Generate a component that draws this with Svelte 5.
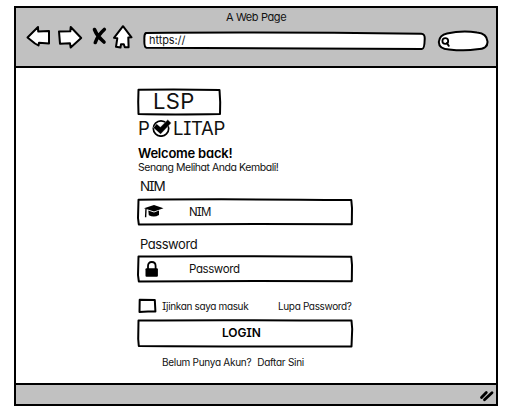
<script>
  const fields = { user: 'NIM', pass: 'Password' };
</script>

{#snippet frame(w, h, d)}
  <svg class="frame" width={w} height={h} viewBox="0 0 {w} {h}" aria-hidden="true">
    <path {d} fill="#fff" stroke="#000" stroke-width="2" stroke-linejoin="round" />
  </svg>
{/snippet}

<div class="page">
  <div class="window">
    <header>
      <div class="title"><span>A Web Page</span></div>
      <nav>
        <svg class="tools" width="110" height="28" viewBox="0 0 110 28" fill="#fff" stroke="#000" stroke-width="2" stroke-linejoin="round" stroke-linecap="round">
          <path d="M1.5 12.5 L12 2 L12.2 6.5 L23 6 L23 18.5 L13 17.8 L12.5 20.5 L9 18.5Z" />
          <path d="M33 6.5 L44.3 6.3 L44.7 2 L55.2 13 L44.7 22.5 L44 18.3 L34 18.7Z" />
          <path d="M68.5 4.5 Q71 11 78 17M78.3 4.5 Q72 10 69.3 17.5" stroke-width="3.6" fill="none" />
          <path d="M97 1.2 L105.5 12.3 L102.3 12.6 L102.6 22.3 L98.8 22.3 L97.8 19.2 L95 19.2 L94.5 22.5 L90 21.8 L91.3 13.3 L88 12.8Z" />
        </svg>
        <div class="url">
          {@render frame(284, 20, 'M3 2 Q120 .8 278 2.8 Q282 2.6 281.7 8 Q281.5 18 279 18 Q120 17 3.5 16.8 Q1 16 1.4 9 Q1 3 3 2Z')}
          <span>https://</span>
        </div>
        <svg class="search" width="54" height="24" viewBox="0 0 54 24" fill="#fff" stroke="#000" stroke-width="2">
          <path d="M10 3.5 Q25 .3 40 2.5 Q50 3.5 50.5 11.5 Q51 19 40 19.3 Q28 21.3 12 19.5 Q2 19 1.8 12 Q2.5 5 10 3.5Z" />
          <circle cx="8.3" cy="11" r="2.9" stroke-width="1.8" />
          <path d="M10 13.2 L11.7 15.8" stroke-linecap="round" />
        </svg>
      </nav>
    </header>

    <main>
      <div class="lsp">
        {@render frame(85, 28, 'M1.5 1.8 Q40 1 82.5 2 L83.2 14 L83 26 Q35 26.8 1.5 26 L1.2 14Z')}
        <span>LSP</span>
      </div>
      <div class="brand">
        <span class="p">P</span>
        <svg width="20" height="18" viewBox="0 0 20 18">
          <circle cx="9" cy="9.5" r="7.7" fill="none" stroke="#000" stroke-width="1.7" />
          <path d="M1.3 8.8 L4.6 4.8 L8.4 8 L15.8 .6 L19.3 4 L8.6 15.2Z" stroke="#fff" stroke-width=".4" />
        </svg>
        <span class="litap">LITAP</span>
      </div>
      <h1><span>Welcome back!</span></h1>
      <p class="sub"><span>Senang Melihat Anda Kembali!</span></p>

      <div class="label nim"><span>NIM</span></div>
      <div class="field">
        {@render frame(217, 28, 'M1.5 1.8 Q80 .8 214.3 2 L215 10 L214.8 26.3 Q110 25.8 1.8 26.4 L1 20Z')}
        <svg class="icon" width="20" height="16" viewBox="0 0 20 16">
          <path d="M0 4.2 L10 1 L19.5 4.2 L10 7.4Z M4.3 6.6 L10 8.5 L15 6.6 L15 11 Q10 14 4.8 11.2Z" />
          <path d="M2 4.7 L1.6 13.2" stroke="#000" stroke-width="1.4" />
        </svg>
        <span class="short">{fields.user}</span>
      </div>

      <div class="label pw"><span>Password</span></div>
      <div class="field">
        {@render frame(217, 28, 'M1.5 1.5 Q80 .8 214.3 1.8 L215 10 L214.8 26.3 Q110 25.8 1.8 26.4 L1 20Z')}
        <svg class="icon" width="20" height="16" viewBox="0 0 20 16">
          <path d="M4 8 V5 Q4 1 7.8 1 Q11.6 1 11.6 5 V8" fill="none" stroke="#000" stroke-width="1.8" />
          <rect x="1.5" y="7.3" width="12.4" height="8.5" rx="1" />
        </svg>
        <span>{fields.pass}</span>
      </div>

      <div class="options">
        <svg width="20" height="16" viewBox="0 0 20 16">
          <path d="M2.7 1.8 L17.8 2 L18.4 13.5 L11 13.4 L2.5 14Z" fill="#fff" stroke="#000" stroke-width="2" stroke-linejoin="round" />
        </svg>
        <span class="remember">Ijinkan saya masuk</span>
        <span class="forgot">Lupa Password?</span>
      </div>

      <div class="login">
        {@render frame(217, 29, 'M1.5 1.5 Q80 .8 214.5 1.6 L215.2 10 L214.5 27.5 Q100 27.8 1.8 27 L1.2 20Z')}
        <b>LOGIN</b>
      </div>

      <p class="signup"><span>Belum Punya Akun?</span><span>Daftar Sini</span></p>
    </main>

    <footer>
      <svg width="16" height="14" viewBox="0 0 16 14" fill="none" stroke="#000" stroke-width="2.8" stroke-linecap="round">
        <path d="M2.5 8.5 L7.3 3.5M5.5 10.8 L13 3.8" />
      </svg>
    </footer>
  </div>
</div>

<style>
  .page {
    box-sizing: border-box;
    width: 514px;
    height: 414px;
    padding: 6px 0 0 14px;
    background: #fff;
    color: #111;
    font: 11px/14px Inter, sans-serif;
    font-feature-settings: 'cv11', 'cv08';
    white-space: nowrap;
    overflow: hidden;
  }
  .window {
    box-sizing: border-box;
    width: 484px;
    height: 400px;
    border: 2px solid #000;
    display: flex;
    flex-direction: column;
  }
  header {
    height: 58px;
    background: #c1c1c1;
    border-bottom: 2px solid #000;
  }
  .title { height: 16px; line-height: 18px; padding-left: 210px; letter-spacing: -.38px; }
  nav { display: flex; align-items: flex-start; }
  .tools { margin: 1px 0 0 10px; }
  .url { position: relative; width: 284px; height: 20px; margin: 7px 0 0 7px; }
  .url span { position: relative; display: block; margin-left: 6px; line-height: 18px; letter-spacing: -.1px; }
  .search { margin: 6px 0 0 10px; }
  .frame { position: absolute; left: 0; top: 0; }
  svg { display: block; flex: none; }

  main { flex: 1; width: 217px; padding: 20px 0 0 121px; }
  .lsp { position: relative; width: 85px; height: 28px; }
  .lsp span { position: relative; display: block; padding-left: 16px; font-size: 22px; line-height: 26px; letter-spacing: .3px; }
  .brand { display: flex; height: 22px; font-size: 18.5px; line-height: 25px; }
  .brand svg { margin: 3px 0 0 2px; }
  .litap { letter-spacing: -.3px; padding-left: 1px; }
  .p { width: 13px; padding-left: 1px; box-sizing: border-box; }
  h1 { margin: 7px 0 0 1px; font-size: 13px; line-height: 16px; font-weight: 600; letter-spacing: -.22px; color: #000; }
  p { margin: 0; }
  .sub { height: 14px; padding-left: 1px; font-size: 10.5px; letter-spacing: -.45px; }
  .label { height: 18px; padding-left: 3px; line-height: 18px; }
  .nim { margin-top: 2px; margin-bottom: 3px; font-size: 13.5px; letter-spacing: -1.3px; }
  .pw { margin-top: 9px; margin-bottom: 2px; font-size: 13px; letter-spacing: -.45px; }
  .field { position: relative; display: flex; width: 217px; height: 28px; align-items: center; font-size: 11.5px; letter-spacing: -.4px; }
  .field .icon { position: relative; margin-left: 7px; }
  .field span { position: relative; margin-left: 25px; }
  .field .short { letter-spacing: -.9px; }
  .options { display: flex; margin-top: 15px; height: 16px; font-size: 10px; line-height: 16px; letter-spacing: -.35px; }
  .remember { width: 112px; margin-left: 5px; }
  .forgot { margin-left: 4px; }
  .login { position: relative; height: 29px; margin-top: 5px; line-height: 27px; font-size: 12px; padding-left: 85px; color: #000; }
  .login b { position: relative; font-weight: 600; letter-spacing: -.1px; }
  .signup { display: flex; gap: 6px; margin-top: 6px; padding-left: 25px; font-size: 10px; line-height: 16px; letter-spacing: -.28px; }

  footer { height: 19px; background: #c1c1c1; border-top: 2px solid #000; display: flex; justify-content: flex-end; }
  footer svg { margin: 4px 1px 0 0; }
</style>
